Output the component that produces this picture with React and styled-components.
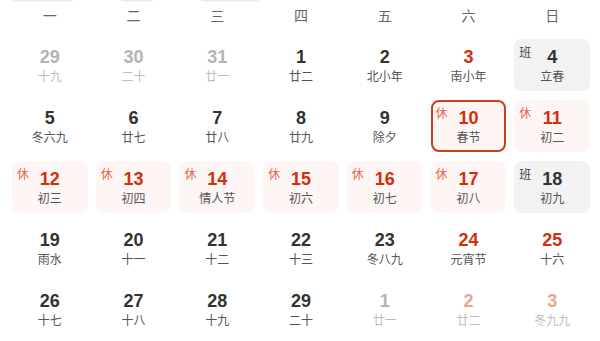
import styled, { createGlobalStyle, css } from 'styled-components';

const GlobalStyle = createGlobalStyle`
  html, body {
    margin: 0;
    padding: 0;
    background: #ffffff;
    overflow: hidden;
  }
  body {
    font-family: "Liberation Sans", "Noto Sans CJK SC", sans-serif;
  }
`;

const weekdays = ['一', '二', '三', '四', '五', '六', '日'];

// kind: prev | next ; red: weekend / holiday number ; tag: 休 | 班 ; today: selected
const days = [
  { d: 29, l: '十九', kind: 'prev' },
  { d: 30, l: '二十', kind: 'prev' },
  { d: 31, l: '廿一', kind: 'prev' },
  { d: 1, l: '廿二' },
  { d: 2, l: '北小年' },
  { d: 3, l: '南小年', red: true },
  { d: 4, l: '立春', tag: '班' },
  { d: 5, l: '冬六九' },
  { d: 6, l: '廿七' },
  { d: 7, l: '廿八' },
  { d: 8, l: '廿九' },
  { d: 9, l: '除夕' },
  { d: 10, l: '春节', red: true, tag: '休', today: true },
  { d: 11, l: '初二', red: true, tag: '休' },
  { d: 12, l: '初三', red: true, tag: '休' },
  { d: 13, l: '初四', red: true, tag: '休' },
  { d: 14, l: '情人节', red: true, tag: '休' },
  { d: 15, l: '初六', red: true, tag: '休' },
  { d: 16, l: '初七', red: true, tag: '休' },
  { d: 17, l: '初八', red: true, tag: '休' },
  { d: 18, l: '初九', tag: '班' },
  { d: 19, l: '雨水' },
  { d: 20, l: '十一' },
  { d: 21, l: '十二' },
  { d: 22, l: '十三' },
  { d: 23, l: '冬八九' },
  { d: 24, l: '元宵节', red: true },
  { d: 25, l: '十六', red: true },
  { d: 26, l: '十七' },
  { d: 27, l: '十八' },
  { d: 28, l: '十九' },
  { d: 29, l: '二十' },
  { d: 1, l: '廿一', kind: 'next' },
  { d: 2, l: '廿二', kind: 'next', red: true },
  { d: 3, l: '冬九九', kind: 'next', red: true },
];

const Page = styled.div`
  width: 600px;
  height: 341px;
  overflow: hidden;
`;

const Toolbar = styled.div`
  display: flex;
  gap: 43px;
  height: 30px;
  margin-top: -30px;
  padding-left: 10px;
`;

const Picker = styled.div`
  width: ${({ $w }) => $w}px;
  height: 30px;
  border-radius: 6px;
  background: #fff;
  box-shadow: 0 1px 2px rgba(0, 0, 0, 0.12);
`;

const Calendar = styled.div`
  display: grid;
  grid-template-columns: repeat(7, 1fr);
  column-gap: 8px;
  row-gap: 9px;
  padding: 0 10px 0 12px;
`;

const Weekday = styled.div`
  height: 30px;
  display: flex;
  align-items: center;
  justify-content: center;
  font-family: "Noto Sans CJK SC", sans-serif;
  font-size: 14px;
  color: #666;
`;

const Cell = styled.div`
  position: relative;
  height: 52px;
  box-sizing: border-box;
  border-radius: 8px;
  display: flex;
  flex-direction: column;
  align-items: center;
  padding-top: 7px;
  ${({ $tag }) =>
    $tag === '休' &&
    css`
      background: #fdf6f4;
    `}
  ${({ $tag }) =>
    $tag === '班' &&
    css`
      background: #f2f2f2;
    `}
  ${({ $today }) =>
    $today &&
    css`
      border: 2px solid #c9401a;
      padding-top: 5px;
    `}
`;

const numberColor = ({ $kind, $red }) => {
  if ($kind === 'prev') return '#b3b3b3';
  if ($kind === 'next') return $red ? '#eaa592' : '#b3b3b3';
  return $red ? '#cf310c' : '#333333';
};

const Num = styled.div`
  font-family: "Liberation Sans", sans-serif;
  font-weight: 700;
  font-size: 18px;
  line-height: 22px;
  color: ${numberColor};
`;

const Lunar = styled.div`
  font-family: "Noto Sans CJK SC", sans-serif;
  font-size: 12px;
  line-height: 16px;
  color: ${({ $kind }) => ($kind ? '#bdbdbd' : '#555555')};
`;

const Tag = styled.span`
  position: absolute;
  left: ${({ $today }) => ($today ? 3 : 5)}px;
  top: ${({ $today }) => ($today ? 4 : 6)}px;
  font-family: "Noto Sans CJK SC", sans-serif;
  font-size: 12px;
  line-height: 14px;
  color: ${({ $tag }) => ($tag === '休' ? '#e0664a' : '#444444')};
`;

export default function App() {
  return (
    <Page>
      <GlobalStyle />
      <Toolbar>
        <Picker $w={65} />
        <Picker $w={37} />
        <Picker $w={64} />
      </Toolbar>
      <Calendar>
        {weekdays.map((w) => (
          <Weekday key={w}>{w}</Weekday>
        ))}
        {days.map((day, i) => (
          <Cell key={i} $tag={day.tag} $today={day.today}>
            {day.tag && (
              <Tag $tag={day.tag} $today={day.today}>
                {day.tag}
              </Tag>
            )}
            <Num $kind={day.kind} $red={day.red}>
              {day.d}
            </Num>
            <Lunar $kind={day.kind}>{day.l}</Lunar>
          </Cell>
        ))}
      </Calendar>
    </Page>
  );
}
